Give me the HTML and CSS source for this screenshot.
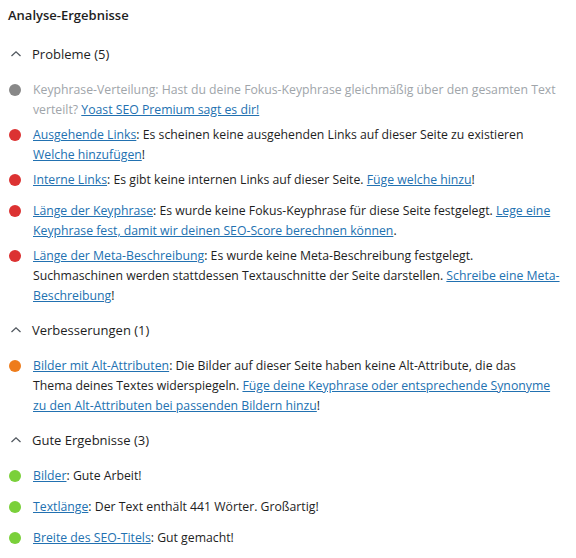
FILE: index.html
```html
<!DOCTYPE html>
<html lang="de">
<head>
    <meta charset="UTF-8">
    <meta name="viewport" content="width=device-width, initial-scale=1.0">
    <title>Analyse-Ergebnisse</title>
    <link rel="stylesheet" href="styles.css">
</head>
<body>

<div class="analysis">
    <h2 class="analysis-title">Analyse-Ergebnisse</h2>

    <!-- Probleme -->
    <section class="group">
        <div class="group-head">
            <svg class="chevron" width="12" height="8" viewBox="0 0 12 8"><path d="M1.5 6 L6 1.8 L10.5 6" fill="none" stroke="#50575e" stroke-width="1.3"/></svg>
            <span>Probleme (5)</span>
        </div>
        <ul class="results">
            <li class="result">
                <span class="bullet bullet-gray"></span>
                <p class="result-text muted">Keyphrase-Verteilung: Hast du deine Fokus-Keyphrase gleichmäßig über den gesamten Text verteilt? <a href="#">Yoast SEO Premium sagt es dir!</a></p>
            </li>
            <li class="result">
                <span class="bullet bullet-red"></span>
                <p class="result-text"><a href="#">Ausgehende Links</a>: Es scheinen keine ausgehenden Links auf dieser Seite zu existieren <a href="#">Welche hinzufügen</a>!</p>
            </li>
            <li class="result">
                <span class="bullet bullet-red"></span>
                <p class="result-text"><a href="#">Interne Links</a>: Es gibt keine internen Links auf dieser Seite. <a href="#">Füge welche hinzu</a>!</p>
            </li>
            <li class="result">
                <span class="bullet bullet-red"></span>
                <p class="result-text"><a href="#">Länge der Keyphrase</a>: Es wurde keine Fokus-Keyphrase für diese Seite festgelegt. <a href="#">Lege eine Keyphrase fest, damit wir deinen SEO-Score berechnen können</a>.</p>
            </li>
            <li class="result">
                <span class="bullet bullet-red"></span>
                <p class="result-text"><a href="#">Länge der Meta-Beschreibung</a>: Es wurde keine Meta-Beschreibung festgelegt. Suchmaschinen werden stattdessen Textauschnitte der Seite darstellen. <a href="#">Schreibe eine Meta-Beschreibung</a>!</p>
            </li>
        </ul>
    </section>

    <!-- Verbesserungen -->
    <section class="group">
        <div class="group-head">
            <svg class="chevron" width="12" height="8" viewBox="0 0 12 8"><path d="M1.5 6 L6 1.8 L10.5 6" fill="none" stroke="#50575e" stroke-width="1.3"/></svg>
            <span>Verbesserungen (1)</span>
        </div>
        <ul class="results">
            <li class="result">
                <span class="bullet bullet-orange"></span>
                <p class="result-text"><a href="#">Bilder mit Alt-Attributen</a>: Die Bilder auf dieser Seite haben keine Alt-Attribute, die das<br>Thema deines Textes widerspiegeln. <a href="#">Füge deine Keyphrase oder entsprechende Synonyme<br>zu den Alt-Attributen bei passenden Bildern hinzu</a>!</p>
            </li>
        </ul>
    </section>

    <!-- Gute Ergebnisse -->
    <section class="group">
        <div class="group-head">
            <svg class="chevron" width="12" height="8" viewBox="0 0 12 8"><path d="M1.5 6 L6 1.8 L10.5 6" fill="none" stroke="#50575e" stroke-width="1.3"/></svg>
            <span>Gute Ergebnisse (3)</span>
        </div>
        <ul class="results">
            <li class="result">
                <span class="bullet bullet-green"></span>
                <p class="result-text"><a href="#">Bilder</a>: Gute Arbeit!</p>
            </li>
            <li class="result">
                <span class="bullet bullet-green"></span>
                <p class="result-text"><a href="#">Textlänge</a>: Der Text enthält 441 Wörter. Großartig!</p>
            </li>
            <li class="result">
                <span class="bullet bullet-green"></span>
                <p class="result-text"><a href="#">Breite des SEO-Titels</a>: Gut gemacht!</p>
            </li>
        </ul>
    </section>
</div>

</body>
</html>
```

FILE: styles.css
```css
body {
    font-family: 'Open Sans', 'Noto Sans', sans-serif;
    font-size: 12.25px;
    margin: 0;
    padding: 0;
    background-color: #ffffff;
    color: #1e1e1e;
}

.analysis {
    padding: 5px 16px 0 8px;
}

.analysis-title {
    margin: 0;
    font-size: 13px;
    font-weight: 600;
    line-height: 20px;
}

.group {
    margin-top: 19px;
}

.group + .group {
    margin-top: 14px;
}

.group-head {
    display: flex;
    align-items: center;
    height: 20px;
    font-size: 13px;
    font-weight: 500;
}

.chevron {
    margin-left: 2px;
    margin-right: 10px;
}

.results {
    list-style: none;
    margin: 16px 0 0 0;
    padding: 0;
}

.result {
    display: flex;
    align-items: flex-start;
    min-height: 26px;
    margin-bottom: 5px;
}

.bullet {
    flex: none;
    width: 12px;
    height: 12px;
    border-radius: 50%;
    margin: 4px 12px 0 1px;
}

.bullet-gray { background-color: #888888; }
.bullet-red { background-color: #dc3232; }
.bullet-orange { background-color: #ee7c1b; }
.bullet-green { background-color: #7ad03a; }

.result-text {
    margin: 0;
    line-height: 20px;
}

.result-text.muted {
    color: #a0a5aa;
}

.result-text a {
    color: #2271b1;
    text-decoration: underline;
}
```
